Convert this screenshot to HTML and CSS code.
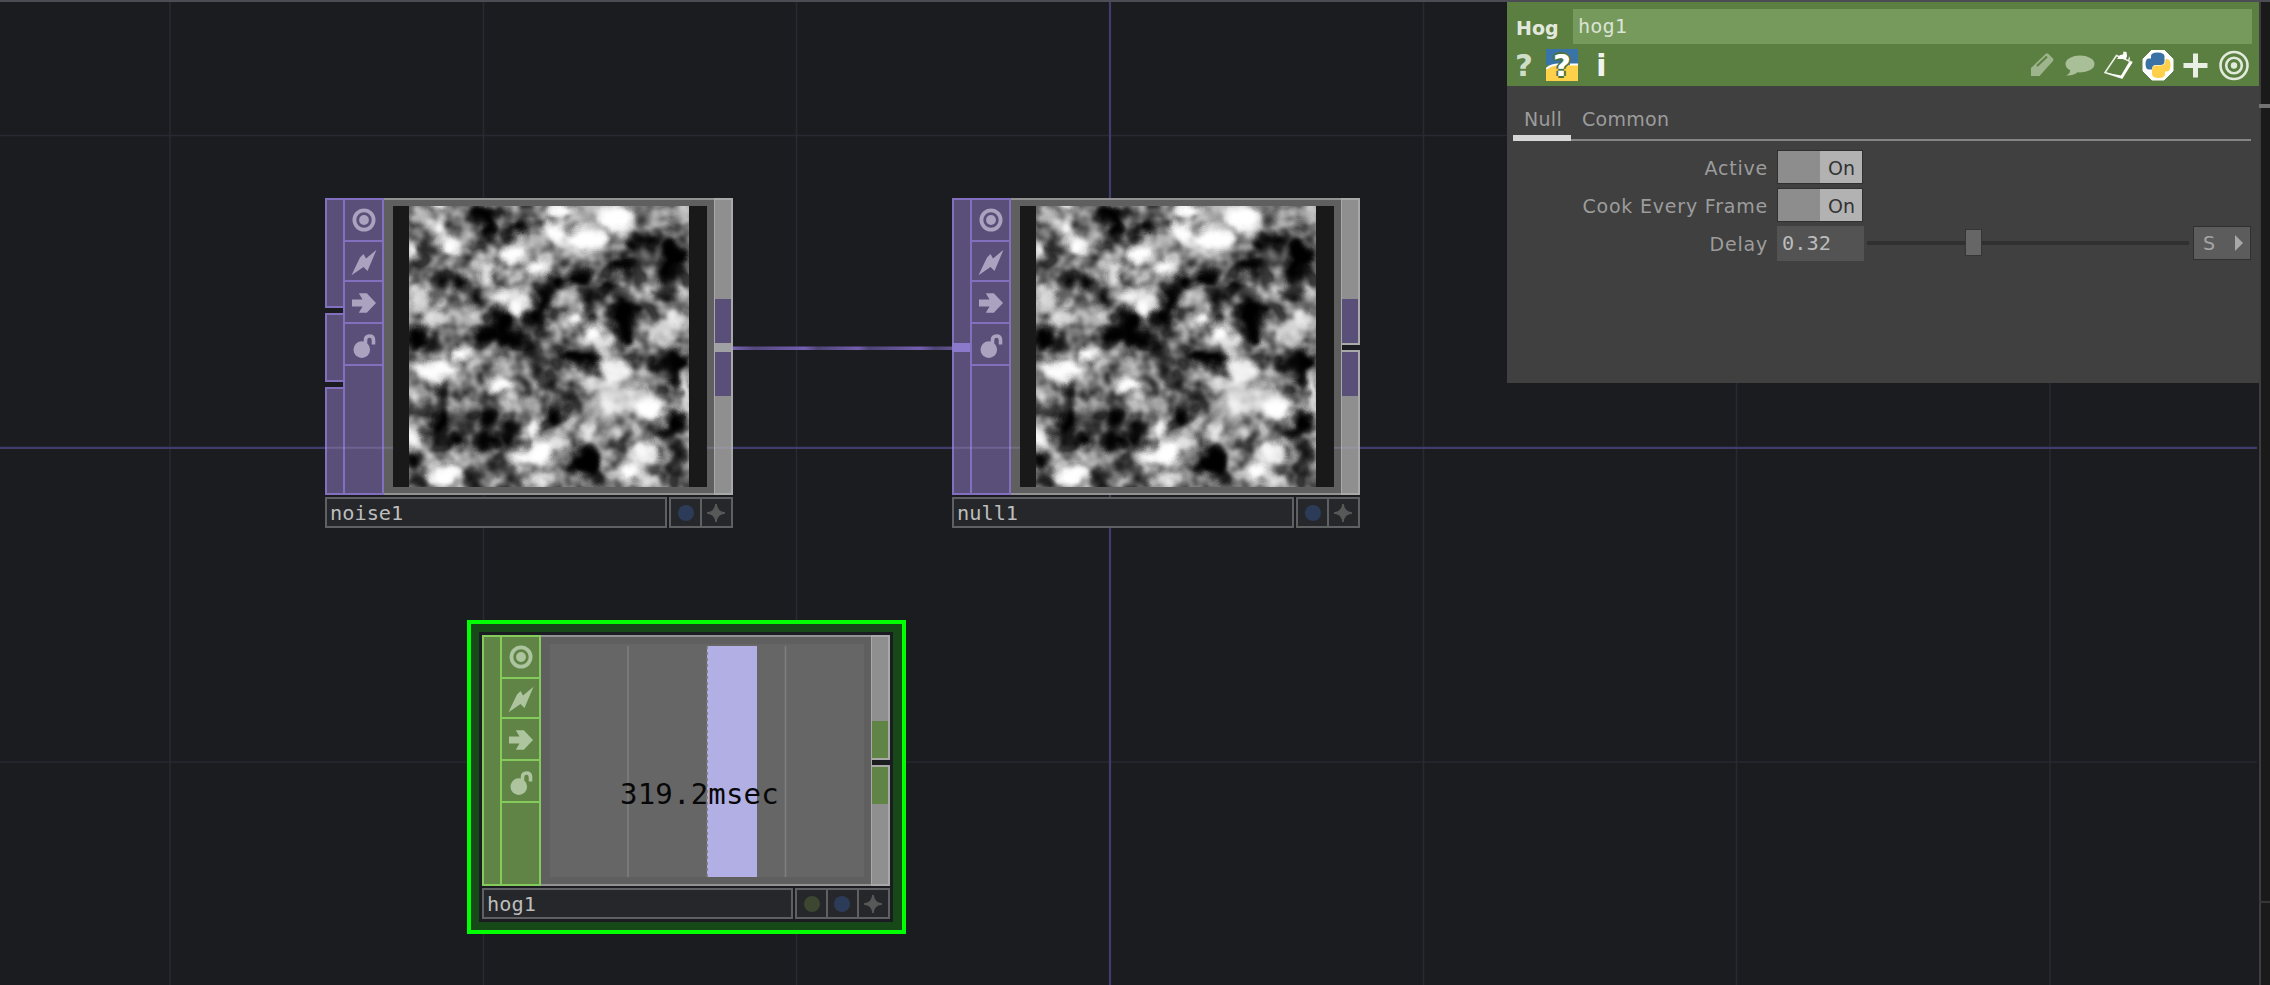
FILE: index.html
```
<!DOCTYPE html>
<html lang="en">
<head>
<meta charset="utf-8">
<title>Network Editor</title>
<link rel="stylesheet" href="styles.css">
</head>
<body>
<svg class="defs" width="0" height="0">
  <defs>
    <symbol id="i-view" viewBox="0 0 24 24"><circle cx="12" cy="12" r="9.6" fill="none" stroke="currentColor" stroke-width="3.8"/><circle cx="12" cy="12" r="4.9" fill="currentColor"/></symbol>
    <symbol id="i-bolt" viewBox="0 0 26 26"><path d="M25.5 .3 16.500 21.500 12.500 17.500 .5 25.7 9 8 12.500 4.500 15 9Z" fill="currentColor"/></symbol>
    <symbol id="i-arrow" viewBox="0 0 24 20"><path d="M0 6.4H10.5L6.8 .3H14.8L24 10 14.8 19.7H6.8L10.5 13.6H0Z" fill="currentColor"/></symbol>
    <symbol id="i-lock" viewBox="0 0 24 24"><circle cx="9.800" cy="15.600" r="8.300" fill="currentColor"/><path d="M13.500 9V6Q13.500 2 17.500 2T21.500 6V10.500" fill="none" stroke="currentColor" stroke-width="3.6"/></symbol>
    <symbol id="i-star" viewBox="0 0 20 20"><path d="M10 0Q10.7 9.300 20 10 10.700 10.700 10 20 9.300 10.700 0 10 9.300 9.300 10 0Z" fill="currentColor" stroke="currentColor" stroke-width="1.800" stroke-linejoin="round"/></symbol>
    <filter id="soft" filterUnits="userSpaceOnUse" x="243" y="25" width="920" height="920" color-interpolation-filters="sRGB">
      <feGaussianBlur in="SourceGraphic" stdDeviation="11" result="b"/>
      <feTurbulence type="fractalNoise" baseFrequency="0.02" numOctaves="2" seed="3" result="t"/>
      <feDisplacementMap in="b" in2="t" scale="34" xChannelSelector="R" yChannelSelector="G"/>
    </filter>
    <filter id="cloud" x="0" y="0" width="100%" height="100%" color-interpolation-filters="sRGB">
      <feTurbulence type="fractalNoise" baseFrequency="0.02" numOctaves="2" seed="7"/>
      <feColorMatrix values="2.4 0 0 0 -.75  2.4 0 0 0 -.75  2.4 0 0 0 -.75  0 0 0 0 1"/>
    </filter>
    <symbol id="noise" viewBox="283 65 840 840" preserveAspectRatio="none">
      <rect x="283" y="65" width="840" height="840" fill="#727272"/>
      <rect x="283" y="65" width="840" height="840" filter="url(#cloud)" opacity=".5"/>
      <g filter="url(#soft)">
        <g fill="#fff">
          <ellipse cx="375" cy="60" rx="35" ry="18"/><ellipse cx="320" cy="100" rx="30" ry="25" opacity=".6"/><ellipse cx="370" cy="125" rx="20" ry="22"/><ellipse cx="405" cy="185" rx="26" ry="35"/><ellipse cx="295" cy="195" rx="18" ry="22"/>
          <ellipse cx="450" cy="170" rx="26" ry="30" opacity=".5"/><ellipse cx="595" cy="210" rx="42" ry="30"/><ellipse cx="520" cy="245" rx="30" ry="20" opacity=".8"/><ellipse cx="670" cy="250" rx="40" ry="24"/><ellipse cx="640" cy="170" rx="50" ry="25" opacity=".5"/>
          <ellipse cx="740" cy="75" rx="38" ry="26"/><ellipse cx="720" cy="145" rx="45" ry="28" transform="rotate(40 720 145)"/><ellipse cx="820" cy="165" rx="60" ry="38"/><ellipse cx="905" cy="100" rx="55" ry="45"/><ellipse cx="830" cy="90" rx="50" ry="40" opacity=".5"/><ellipse cx="1000" cy="85" rx="60" ry="20" opacity=".5"/><ellipse cx="1100" cy="80" rx="28" ry="25" opacity=".6"/><ellipse cx="750" cy="200" rx="50" ry="30" opacity=".4"/>
          <ellipse cx="315" cy="340" rx="28" ry="45" opacity=".8"/><ellipse cx="365" cy="395" rx="42" ry="28" opacity=".8"/><ellipse cx="510" cy="275" rx="22" ry="25" opacity=".8"/><ellipse cx="590" cy="335" rx="60" ry="28" opacity=".85"/><ellipse cx="610" cy="370" rx="25" ry="25"/><ellipse cx="450" cy="390" rx="40" ry="35" opacity=".45"/>
          <ellipse cx="775" cy="405" rx="26" ry="22"/><ellipse cx="835" cy="440" rx="28" ry="32"/><ellipse cx="870" cy="480" rx="35" ry="22" opacity=".8"/><ellipse cx="755" cy="340" rx="40" ry="26" opacity=".45"/>
          <ellipse cx="1090" cy="400" rx="30" ry="32" opacity=".7"/><ellipse cx="1040" cy="440" rx="35" ry="30" opacity=".7"/><ellipse cx="1000" cy="320" rx="20" ry="30" opacity=".4"/><ellipse cx="1105" cy="330" rx="18" ry="20" opacity=".5"/><ellipse cx="1080" cy="480" rx="40" ry="15" opacity=".5"/>
          <ellipse cx="440" cy="510" rx="32" ry="26"/><ellipse cx="375" cy="555" rx="58" ry="26"/><ellipse cx="315" cy="545" rx="25" ry="20"/><ellipse cx="350" cy="580" rx="35" ry="15" opacity=".8"/><ellipse cx="560" cy="600" rx="40" ry="26"/><ellipse cx="555" cy="535" rx="35" ry="24" opacity=".55"/>
          <ellipse cx="310" cy="640" rx="20" ry="26" opacity=".5"/><ellipse cx="290" cy="760" rx="24" ry="38" opacity=".95"/><ellipse cx="440" cy="660" rx="35" ry="24" opacity=".4"/><ellipse cx="620" cy="650" rx="40" ry="24" opacity=".5"/>
          <ellipse cx="905" cy="560" rx="42" ry="40" opacity=".9"/><ellipse cx="850" cy="595" rx="55" ry="20" opacity=".7"/><ellipse cx="910" cy="650" rx="55" ry="45" opacity=".7"/><ellipse cx="1005" cy="670" rx="50" ry="35"/><ellipse cx="970" cy="620" rx="45" ry="25" opacity=".7"/><ellipse cx="1118" cy="620" rx="14" ry="60"/><ellipse cx="850" cy="680" rx="35" ry="45" opacity=".5"/>
          <ellipse cx="650" cy="735" rx="22" ry="24"/><ellipse cx="680" cy="800" rx="36" ry="45"/><ellipse cx="620" cy="815" rx="40" ry="20"/><ellipse cx="735" cy="770" rx="40" ry="24" opacity=".8"/><ellipse cx="815" cy="740" rx="28" ry="26" opacity=".7"/><ellipse cx="675" cy="880" rx="40" ry="24" opacity=".8"/><ellipse cx="730" cy="880" rx="28" ry="20" opacity=".4"/>
          <ellipse cx="390" cy="870" rx="50" ry="34"/><ellipse cx="350" cy="830" rx="20" ry="24" opacity=".5"/><ellipse cx="460" cy="820" rx="35" ry="25" opacity=".4"/><ellipse cx="990" cy="800" rx="50" ry="28" opacity=".9"/><ellipse cx="945" cy="860" rx="32" ry="32"/><ellipse cx="1000" cy="890" rx="32" ry="20" opacity=".8"/><ellipse cx="1115" cy="760" rx="14" ry="30" opacity=".5"/><ellipse cx="890" cy="740" rx="40" ry="26" opacity=".5"/>
        </g>
        <g fill="#000">
          <ellipse cx="510" cy="85" rx="36" ry="28"/><ellipse cx="520" cy="135" rx="26" ry="34"/><ellipse cx="580" cy="135" rx="20" ry="18"/><ellipse cx="622" cy="130" rx="22" ry="24"/><ellipse cx="560" cy="85" rx="25" ry="15" opacity=".7"/><ellipse cx="340" cy="190" rx="30" ry="22" opacity=".7"/><ellipse cx="475" cy="100" rx="15" ry="15" opacity=".7"/>
          <ellipse cx="380" cy="285" rx="24" ry="18"/><ellipse cx="435" cy="295" rx="22" ry="28"/><ellipse cx="485" cy="345" rx="24" ry="30" opacity=".85"/><ellipse cx="545" cy="290" rx="14" ry="24" opacity=".6"/><ellipse cx="300" cy="250" rx="22" ry="24" opacity=".4"/><ellipse cx="370" cy="335" rx="12" ry="25" opacity=".5"/>
          <ellipse cx="722" cy="292" rx="30" ry="26"/><ellipse cx="795" cy="278" rx="42" ry="28"/><ellipse cx="690" cy="350" rx="22" ry="45"/><ellipse cx="660" cy="400" rx="30" ry="30"/><ellipse cx="830" cy="350" rx="20" ry="38" opacity=".85"/><ellipse cx="880" cy="305" rx="28" ry="18" opacity=".9"/><ellipse cx="920" cy="325" rx="24" ry="18" opacity=".7"/>
          <ellipse cx="950" cy="178" rx="22" ry="24"/><ellipse cx="1000" cy="170" rx="32" ry="20" opacity=".95"/><ellipse cx="925" cy="240" rx="45" ry="24"/><ellipse cx="1068" cy="195" rx="32" ry="32"/><ellipse cx="1055" cy="255" rx="26" ry="50"/><ellipse cx="1100" cy="225" rx="28" ry="36"/><ellipse cx="1050" cy="330" rx="42" ry="20" opacity=".8"/><ellipse cx="1075" cy="130" rx="20" ry="20" opacity=".7"/><ellipse cx="985" cy="110" rx="18" ry="40" opacity=".5"/><ellipse cx="1000" cy="210" rx="40" ry="14" opacity=".5"/>
          <ellipse cx="925" cy="395" rx="38" ry="52"/><ellipse cx="935" cy="455" rx="26" ry="26"/><ellipse cx="965" cy="365" rx="16" ry="15"/>
          <ellipse cx="305" cy="458" rx="30" ry="42"/><ellipse cx="350" cy="480" rx="30" ry="24" opacity=".7"/><ellipse cx="510" cy="450" rx="36" ry="26"/><ellipse cx="565" cy="410" rx="36" ry="38"/><ellipse cx="575" cy="465" rx="38" ry="28"/><ellipse cx="620" cy="450" rx="25" ry="22" opacity=".95"/><ellipse cx="525" cy="540" rx="18" ry="18" opacity=".5"/>
          <ellipse cx="645" cy="500" rx="22" ry="34" opacity=".8"/><ellipse cx="675" cy="540" rx="20" ry="50" opacity=".65"/><ellipse cx="770" cy="515" rx="34" ry="24"/><ellipse cx="820" cy="528" rx="38" ry="24"/><ellipse cx="695" cy="605" rx="30" ry="26" opacity=".7"/><ellipse cx="740" cy="635" rx="32" ry="18" opacity=".7"/><ellipse cx="722" cy="690" rx="28" ry="32"/><ellipse cx="700" cy="450" rx="20" ry="20" opacity=".5"/>
          <ellipse cx="1035" cy="540" rx="35" ry="24" opacity=".9"/><ellipse cx="1090" cy="530" rx="35" ry="28"/><ellipse cx="1075" cy="585" rx="18" ry="38"/><ellipse cx="1055" cy="505" rx="24" ry="15" opacity=".7"/>
          <ellipse cx="380" cy="620" rx="20" ry="30" opacity=".9"/><ellipse cx="430" cy="630" rx="16" ry="16" opacity=".7"/><ellipse cx="378" cy="705" rx="30" ry="42"/><ellipse cx="365" cy="760" rx="24" ry="28" opacity=".8"/><ellipse cx="425" cy="765" rx="32" ry="24"/><ellipse cx="450" cy="715" rx="30" ry="30" opacity=".5"/><ellipse cx="520" cy="700" rx="28" ry="32"/><ellipse cx="505" cy="765" rx="26" ry="38" opacity=".95"/><ellipse cx="545" cy="765" rx="24" ry="26"/><ellipse cx="580" cy="720" rx="26" ry="24" opacity=".9"/><ellipse cx="590" cy="765" rx="16" ry="34"/><ellipse cx="510" cy="655" rx="22" ry="22" opacity=".5"/>
          <ellipse cx="295" cy="825" rx="20" ry="26"/><ellipse cx="310" cy="880" rx="24" ry="22" opacity=".8"/><ellipse cx="480" cy="880" rx="28" ry="30" opacity=".6"/><ellipse cx="550" cy="850" rx="40" ry="25" opacity=".5"/><ellipse cx="600" cy="880" rx="30" ry="18" opacity=".5"/>
          <ellipse cx="815" cy="830" rx="48" ry="42"/><ellipse cx="770" cy="850" rx="24" ry="16" opacity=".9"/><ellipse cx="840" cy="880" rx="35" ry="18" opacity=".9"/><ellipse cx="1085" cy="705" rx="28" ry="34"/><ellipse cx="1050" cy="745" rx="38" ry="16" transform="rotate(-20 1050 745)"/><ellipse cx="1095" cy="795" rx="24" ry="36" opacity=".8"/><ellipse cx="1075" cy="845" rx="26" ry="28" opacity=".7"/><ellipse cx="1115" cy="890" rx="16" ry="20" opacity=".6"/>
          <ellipse cx="855" cy="715" rx="14" ry="26" opacity=".4"/><ellipse cx="935" cy="765" rx="22" ry="12" opacity=".35"/><ellipse cx="800" cy="640" rx="16" ry="20" opacity=".3"/>
        </g>
      </g>
    </symbol>
    <linearGradient id="flow" gradientUnits="userSpaceOnUse" x1="732" y1="0" x2="953" y2="0">
      <stop offset="0" stop-color="#7863b4"/><stop offset=".1" stop-color="#54487e"/><stop offset=".33" stop-color="#745fb0"/><stop offset=".39" stop-color="#4e4474"/><stop offset=".57" stop-color="#745fb0"/><stop offset=".62" stop-color="#4e4474"/><stop offset=".85" stop-color="#745fb0"/><stop offset=".92" stop-color="#4e4474"/><stop offset="1" stop-color="#63548f"/>
    </linearGradient>
  </defs>
</svg>

<main class="network">
  <svg class="grid" width="2270" height="985">
    <g class="minor">
      <path d="M170 2V985M483.500 2V985M796.500 2V985M1423.500 2V985M1736.500 2V985M2050 2V985M0 135.500H2257M0 762H2257"/>
    </g>
    <path class="axis" d="M1110 2V985M0 447.800H2257"/>
    <rect x="732" y="346.500" width="221" height="3.500" fill="url(#flow)"/>
  </svg>

  <section class="node top noise-node">
    <div class="body">
      <div class="inputs"><i class="in1"></i><i class="in2"></i><i class="in3"></i></div>
      <div class="flags">
        <span><svg class="ic24"><use href="#i-view"/></svg></span>
        <span><svg class="ic26"><use href="#i-bolt"/></svg></span>
        <span><svg class="ic-arrow"><use href="#i-arrow"/></svg></span>
        <span><svg class="ic24"><use href="#i-lock"/></svg></span>
        <span></span>
      </div>
      <div class="viewer"><div class="frame"><svg class="tex"><use href="#noise"/></svg></div></div>
      <div class="outputs joined"><i></i><b></b><i></i></div>
    </div>
    <div class="namebar">
      <div class="name">noise1</div>
      <div class="cells"><span><em class="dot blue"></em></span><span><svg class="star"><use href="#i-star"/></svg></span></div>
    </div>
  </section>

  <section class="node top null-node">
    <div class="body">
      <div class="inputs single"><i></i><b></b><i></i></div>
      <div class="flags">
        <span><svg class="ic24"><use href="#i-view"/></svg></span>
        <span><svg class="ic26"><use href="#i-bolt"/></svg></span>
        <span><svg class="ic-arrow"><use href="#i-arrow"/></svg></span>
        <span><svg class="ic24"><use href="#i-lock"/></svg></span>
        <span></span>
      </div>
      <div class="viewer"><div class="frame"><svg class="tex"><use href="#noise"/></svg></div></div>
      <div class="outputs"><i></i><b></b><i></i></div>
    </div>
    <div class="namebar">
      <div class="name">null1</div>
      <div class="cells"><span><em class="dot blue"></em></span><span><svg class="star"><use href="#i-star"/></svg></span></div>
    </div>
  </section>

  <svg class="grid" width="2270" height="985">
    <path class="ghost" d="M325 447.800H393M707 447.800H733M952 447.800H1020M1334 447.800H1359"/>
  </svg>

  <div class="selection">
    <section class="node chop">
      <div class="body">
        <div class="inputs single"><i></i></div>
        <div class="flags">
          <span><svg class="ic24"><use href="#i-view"/></svg></span>
          <span><svg class="ic26"><use href="#i-bolt"/></svg></span>
          <span><svg class="ic-arrow"><use href="#i-arrow"/></svg></span>
          <span><svg class="ic24"><use href="#i-lock"/></svg></span>
          <span></span>
        </div>
        <div class="viewer">
          <div class="chart">
            <svg width="314" height="233"><path d="M78 2V233M235.500 2V233" stroke="#7f7f7f" stroke-width="1.500"/><rect x="157" y="2" width="50" height="231" fill="#b1afe3"/><path d="M157 2V233" stroke="#77776f" stroke-width="1.500" stroke-dasharray="3 3"/></svg>
            <div class="msec">319.2msec</div>
          </div>
        </div>
        <div class="outputs"><i></i><b></b><i></i></div>
      </div>
      <div class="namebar">
        <div class="name">hog1</div>
        <div class="cells"><span><em class="dot olive"></em></span><span><em class="dot blue"></em></span><span><svg class="star"><use href="#i-star"/></svg></span></div>
      </div>
    </section>
  </div>

  <aside class="side"><i class="tick1"></i><i class="tick2"></i></aside>

  <section class="params">
    <header>
      <div class="title"><strong>Hog</strong><div class="field">hog1</div></div>
      <div class="tools">
        <div class="left">
          <span class="q">?</span>
          <span class="pyq"><svg width="32" height="32"><path d="M0 0H32V16H0Z" fill="#3974a8"/><path d="M0 21Q5 16 13 16H32V32H0Z" fill="#ffd04a"/><path d="M0 20Q5 15.500 13 15.500M24 15.500H32" stroke="#fff" stroke-width="2" fill="none"/></svg><b>?</b></span>
          <span class="inf">i</span>
        </div>
        <svg class="right" width="222" height="32">
          <path d="M3 18 17.500 4Q19 2.500 20.500 4L25 8.500Q26 10 24.500 11.500L11.500 26H3Z" fill="#9db48c"/><path d="M9 16 19 6.500" stroke="#5b8040" stroke-width="2"/>
          <ellipse cx="52" cy="14" rx="14.500" ry="8.500" fill="#a8bf98"/><path d="M42 19Q43 23 38 25.500 46 26 51 21Z" fill="#a8bf98"/>
          <path d="M88.500 5.500 77 22.500 94 28 103.500 12Z" fill="none" stroke="#e9efe5" stroke-width="1.600"/><path d="M77 22.500 94 28 104.500 12.500 101 12 93 25.500Z" fill="#fff"/><path d="M89 9 92 5 95 4.500 95.500 1.500 98.500 2 99 6 98 9ZM101 6 102 9 100 12Z" fill="#fff"/>
          <g transform="translate(115 0)"><path d="M9 0H21L30 9V21L21 30H9L0 21V9Z" fill="#fff" stroke="#fff" stroke-width="1" stroke-linejoin="round"/><path d="M8 8.500V6Q8 2.500 14.500 2.500T21.500 6V11Q21.500 15 17.500 15H12.500Q9 15 9 19.500H6Q2.500 19.500 2.500 14T6 8.500Z" fill="#3a72a5"/><path d="M22 21.500V24Q22 28 15.500 28T9 24V19Q9 15.500 13 15.500H18Q22.500 15.500 22.500 9H24Q27.500 9 27.500 15T24 21.500Z" fill="#ffd04a"/></g>
          <path d="M167.500 3.500V27.500M155.500 15.500H179.500" stroke="#e9efe5" stroke-width="5"/>
          <g fill="none" stroke="#e2eadc" stroke-width="2.600"><circle cx="206" cy="15.500" r="13.500"/><circle cx="206" cy="15.500" r="7.800"/></g><circle cx="206" cy="15.500" r="3.200" fill="#e2eadc"/>
        </svg>
      </div>
    </header>
    <nav><span class="active">Null</span><span>Common</span></nav>
    <div class="rows">
      <div class="row"><label>Active</label><div class="toggle"><i></i><span>On</span></div></div>
      <div class="row"><label>Cook Every Frame</label><div class="toggle"><i></i><span>On</span></div></div>
      <div class="row"><label>Delay</label><div class="num">0.32</div><div class="slider"><i></i></div><div class="menu"><span>S</span><svg width="8" height="16"><path d="M0 0 8 8 0 16Z" fill="#a8a8a8"/></svg></div></div>
    </div>
  </section>
</main>
</body>
</html>
```
FILE: styles.css
```
* { box-sizing: border-box; }
body { margin: 0; background: #1b1c20; font-family: "DejaVu Sans", sans-serif; }
.defs { position: absolute; }
.network { position: relative; width: 2270px; height: 985px; overflow: hidden; border-top: 2px solid #4c4c54; background: #1b1c20; }
.grid { position: absolute; left: 0; top: -2px; }
.minor path { stroke: #282931; stroke-width: 1.6; }
.axis { stroke: #3f3d6c; stroke-width: 2.2; }
.ghost { stroke: #b4aae6; stroke-opacity: .22; stroke-width: 2; }

.node { --fill: #594f79; --line: #8270bf; --glyph: #aaa2bf; width: 408px; }
.noise-node { position: absolute; left: 325px; top: 196px; }
.null-node { position: absolute; left: 952px; top: 196px; }
.chop { --fill: #5f8446; --line: #85cb5c; --glyph: #adc49f; }
.body { display: flex; height: 297px; }
.chop .body { height: 251px; }
.inputs { width: 18px; display: flex; flex-direction: column; gap: 5px; }
.inputs i { background: var(--fill); border: solid var(--line); border-width: 2px 0 2px 2px; }
.in1 { height: 110px; }
.in2 { height: 69px; }
.in3 { flex: 1; }
.inputs.single { gap: 0; }
.inputs.single i { flex: 1; }
.inputs.single i:first-child { border-bottom: 0; flex: none; height: 145px; }
.inputs.single b { height: 9px; background: #8b7acb; }
.inputs.single b + i { border-top: 0; }
.chop .inputs.single i:first-child { height: 251px; border-bottom: 2px solid var(--line); }
.flags { width: 41px; display: grid; grid-template-rows: 42px 40px 42px 42px 1fr; background: var(--fill); color: var(--glyph); border: 2px solid var(--line); }
.flags span { display: flex; align-items: center; justify-content: center; border-bottom: 2px solid var(--line); }
.flags span:nth-child(2), .flags span:nth-child(3) { padding-top: 2px; }
.flags span:nth-child(4) { padding-top: 3px; }
.flags span:last-child { border-bottom: 0; }
.ic24 { width: 24px; height: 24px; }
.ic26 { width: 26px; height: 27px; }
.ic-arrow { width: 24px; height: 20px; }
.viewer { flex: 1; background: #5f5f5f; border: solid #929292; border-width: 2px 0; padding: 6px 7px 6px 9px; }
.chop .viewer { padding-top: 7px; }
.frame { height: 281px; background: #191919; padding-left: 16px; }
.tex { display: block; width: 280px; height: 281px; }
.outputs { width: 19px; background: #8f8f8f; border: 1px solid #a9a9a9; border-width: 2px 2px 2px 1px; padding: 99px 0 0; }
.outputs i { display: block; height: 44px; background: var(--fill); }
.outputs b { display: block; height: 9px; margin-right: -2px; background: #1b1c20; border: solid #a9a9a9; border-width: 2px 0; }
.joined b { background: #a0a1a5; border: 0; margin: 0; }
.chop .outputs { padding-top: 84px; }
.chop .outputs i { height: 37px; }
.namebar { display: flex; gap: 2px; margin-top: 2px; height: 31px; }
.name { flex: 1; border: 2px solid #5f6062; background: #26272a; color: #bdbdbd; font: 20.3px/28px "DejaVu Sans Mono", monospace; padding-left: 3px; }
.cells { display: flex; border: 2px solid #5f6062; background: #26272a; }
.cells span { display: flex; width: 29px; align-items: center; justify-content: center; }
.cells span + span { width: 31px; border-left: 2px solid #5f6062; padding-right: 1px; }
.dot { width: 16px; height: 16px; border-radius: 50%; }
.blue { background: #2c3c58; }
.olive { background: #3c4631; }
.star { width: 18px; height: 18px; color: #585858; }

.selection { position: absolute; left: 467px; top: 618px; width: 439px; height: 314px; border: 4px solid #00ff00; background: #164818; padding: 8px; }
.selection .node { width: 414px; height: 290px; background: #1b1c22; padding: 3px 3px 3px; }
.chart { position: relative; width: 314px; height: 233px; background: #666; }
.chart svg { display: block; }
.msec { position: absolute; left: 70px; top: 132px; font: 29px/36px "DejaVu Sans Mono", monospace; letter-spacing: .2px; color: #080808; }

.side { position: absolute; left: 2259px; top: 0; width: 11px; height: 985px; border-left: 2px solid #3d3d3d; background: #1a1a1a; }
.side i { position: absolute; left: -2px; width: 13px; background: #727272; }
.tick1 { top: 102px; height: 4px; }
.side .tick2 { top: 899px; height: 2px; background: #363636; }

.params { position: absolute; left: 1507px; top: 0; width: 752px; height: 381px; background: #404040; color: #9c9c9c; }
.params header { height: 84px; background: #5a7f40; padding: 7px 7px 0 9px; }
.title { display: flex; height: 35px; color: #e3e8df; }
.title strong { width: 57px; font-size: 19px; line-height: 39px; }
.field { flex: 1; background: #759a5c; font: 20.3px/35px "DejaVu Sans Mono", monospace; padding-left: 5px; color: #dbe3d4; }
.tools { display: flex; justify-content: space-between; padding-top: 5px; }
.left { display: flex; margin-left: -1px; color: #e3e8df; font-size: 31px; font-weight: bold; line-height: 32px; }
.q { width: 31px; color: #cfdcc6; }
.pyq { position: relative; width: 32px; height: 32px; }
.pyq b { position: absolute; left: 7px; top: 0; color: #fff; text-shadow: 2px 0 #4e7040, -2px 0 #4e7040, 0 2px #4e7040, 0 -2px #4e7040; }
.inf { padding-left: 18px; color: #f0f4ee; }
.right { margin: 1px 2px 0 0; }
nav { display: flex; margin: 15px 8px 0 6px; height: 40px; border-bottom: 2px solid #858585; font-size: 19px; line-height: 37px; letter-spacing: .3px; }
nav span { width: 58px; height: 40px; padding-left: 11px; }
nav .active { border-bottom: 6px solid #d6d6d6; }
.rows { display: flex; flex-direction: column; gap: 2px; padding: 8px 8px 0 0; }
.row { display: flex; height: 36px; align-items: center; font-size: 19px; letter-spacing: .8px; }
.row label { width: 261px; text-align: right; margin-right: 9px; padding-top: 2px; }
.toggle { display: flex; width: 86px; height: 34px; border: 1px solid #303030; }
.toggle i { width: 42px; background: #8d8d8d; }
.toggle span { flex: 1; background: #b2b2b2; color: #333; line-height: 35px; padding-left: 8px; letter-spacing: 0; }
.num { width: 87px; height: 35px; background: #535353; color: #bcbcbc; font: 20.3px/34px "DejaVu Sans Mono", monospace; padding-left: 5px; letter-spacing: 0; }
.slider { position: relative; width: 322px; height: 4px; margin-left: 3px; background: #303030; }
.slider i { position: absolute; left: 98px; top: -12px; width: 17px; height: 27px; background: #666; border: 1px solid #353535; }
.menu { display: flex; align-items: center; justify-content: space-between; margin-left: 4px; width: 58px; height: 34px; background: #5c5c5c; border: 1px solid #303030; color: #a5a5a5; padding: 0 7px 0 9px; }
```
